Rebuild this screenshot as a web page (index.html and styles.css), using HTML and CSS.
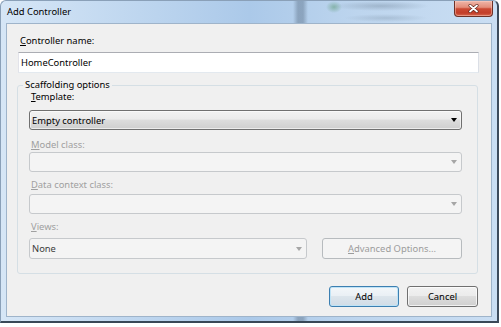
FILE: index.html
```html
<!DOCTYPE html>
<html>
<head>
    <title>Add Controller</title>
    <link rel="stylesheet" href="styles.css">
</head>
<body>
    <div class="window">
        <div class="titlebar">
            <span class="title">Add Controller</span>
            <div class="close">
                <svg width="11" height="9" viewBox="0 0 11 9">
                    <path d="M2 1.5 L9 7.5 M9 1.5 L2 7.5" stroke="#5a1f16" stroke-width="3" stroke-linecap="round"/>
                    <path d="M2 1.5 L9 7.5 M9 1.5 L2 7.5" stroke="#fff" stroke-width="1.8" stroke-linecap="round"/>
                </svg>
            </div>
        </div>

        <div class="client">
            <div class="lbl lbl-name"><u>C</u>ontroller name:</div>
            <div class="textbox">HomeController</div>

            <fieldset class="group">
                <legend>Scaffolding options</legend>

                <div class="lbl lbl-template"><u>T</u>emplate:</div>
                <div class="combo">Empty controller<span class="arrow"></span></div>

                <div class="lbl off lbl-model"><u>M</u>odel class:</div>
                <div class="combo off"><span class="arrow"></span></div>

                <div class="lbl off lbl-data"><u>D</u>ata context class:</div>
                <div class="combo off"><span class="arrow"></span></div>

                <div class="lbl off lbl-views"><u>V</u>iews:</div>
                <div class="views-row">
                    <div class="combo off views">None<span class="arrow"></span></div>
                    <button class="btn off advanced"><u>A</u>dvanced Options...</button>
                </div>
            </fieldset>

            <div class="actions">
                <button class="btn default add">Add</button>
                <button class="btn cancel">Cancel</button>
            </div>
        </div>
    </div>
</body>
</html>
```

FILE: styles.css
```css
* {
    box-sizing: border-box;
}

body {
    margin: 0;
    width: 501px;
    height: 327px;
    overflow: hidden;
    background-color: #fff;
    font-family: "Noto Sans", "DejaVu Sans", sans-serif;
    font-size: 9.4px;
    color: #000;
}

u {
    text-decoration: underline;
}

/* window frame (aero glass look) */
.window {
    width: 499px;
    height: 323px;
    display: flex;
    flex-direction: column;
    border: 1px solid #8aa0b8;
    border-right: 2px solid #3d4b5c;
    border-bottom: 2px solid #394857;
    border-radius: 6px 6px 0 0;
    background:
        linear-gradient(90deg, transparent 292px, rgba(80, 100, 122, 0.4) 297px, rgba(80, 100, 122, 0.4) 302px, transparent 307px),
        linear-gradient(90deg, #d6e6f6 0, #bed6ef 28%, #abc9e9 50%, #bdd5ee 72%, #cadef3 100%);
}

.titlebar {
    height: 22px;
    display: flex;
    align-items: center;
    padding: 0 4px 0 6px;
    background:
        radial-gradient(ellipse 8px 6px at 333px 6px, rgba(70, 140, 90, 0.45), transparent),
        radial-gradient(ellipse 48px 5px at 380px 5px, rgba(100, 120, 140, 0.35), transparent),
        radial-gradient(ellipse 42px 4px at 385px 17px, rgba(100, 120, 140, 0.25), transparent);
}

.title {
    line-height: 14px;
}

.close {
    margin-left: auto;
    align-self: flex-start;
    width: 39px;
    height: 16px;
    display: flex;
    align-items: center;
    justify-content: center;
    border: 1px solid #6d3127;
    border-top: none;
    border-radius: 0 0 4px 4px;
    background: linear-gradient(#efb6a9 0%, #e38d7a 42%, #cb4a33 52%, #c23d29 80%, #d8694f 100%);
    box-shadow: inset 0 0 0 1px rgba(255, 210, 200, 0.45);
}

.close svg {
    display: block;
}

/* dialog client area */
.client {
    margin: 0 5px;
    height: 294px;
    display: flex;
    flex-direction: column;
    padding: 10px 12px 0 11px;
    border: 1px solid #9fb4ca;
    background-color: #f0f0f0;
}

.lbl {
    line-height: 14px;
    padding-left: 2px;
}

.lbl.off {
    color: #a0a0a0;
}

.lbl-name {
    margin-bottom: 4px;
}

.lbl-template {
    margin-bottom: 6px;
}

.lbl-model {
    margin-top: 8px;
}

.lbl-data {
    margin-top: 6px;
    margin-bottom: 2px;
}

.lbl-views {
    margin-top: 6px;
    margin-bottom: 4px;
}

.textbox {
    height: 21px;
    display: flex;
    align-items: center;
    padding-left: 2px;
    border: 1px solid;
    border-color: #abadb3 #dbdfe6 #e3e9ef #e2e3ea;
    background-color: #fff;
}

.group {
    margin: 7px 1px 0 -1px;
    padding: 0 15px 14px 11px;
    border: 1px solid #d5dfe5;
    border-radius: 3px;
}

.group legend {
    margin-left: -6px;
    padding: 0 2px;
    line-height: 10px;
}

.combo {
    height: 20px;
    display: flex;
    align-items: center;
    padding-left: 2px;
    border: 1px solid #707070;
    border-radius: 3px;
    background: linear-gradient(#f2f2f2 0%, #ebebeb 45%, #dddddd 50%, #cfcfcf 100%);
    box-shadow: inset 0 0 0 1px rgba(255, 255, 255, 0.6);
}

.combo .arrow {
    margin-left: auto;
    margin-right: 4px;
    width: 0;
    height: 0;
    border-left: 3.5px solid transparent;
    border-right: 3.5px solid transparent;
    border-top: 4px solid #000;
}

.combo.off {
    border-color: #c6c9cc;
    background: #f4f4f4;
    box-shadow: none;
}

.combo.off .arrow {
    border-top-color: #a6a6a6;
}

.views-row {
    display: flex;
    gap: 15px;
}

.combo.views {
    width: 278px;
    height: 21px;
    color: #3c3c3c;
}

.btn {
    height: 21px;
    padding: 0;
    font: inherit;
    color: #000;
    border: 1px solid #707070;
    border-radius: 3px;
    background: linear-gradient(#f2f2f2 0%, #ebebeb 49%, #dddddd 50%, #cfcfcf 100%);
    box-shadow: inset 0 0 0 1px rgba(255, 255, 255, 0.7);
}

.btn.off {
    flex: 1;
    color: #9c9c9c;
    border-color: #b7bbbe;
    background: #f4f4f4;
    box-shadow: none;
}

.actions {
    display: flex;
    justify-content: flex-end;
    gap: 8px;
    margin: 12px 1px 0 0;
}

.btn.add {
    width: 70px;
    border-color: #3c7fb1;
    background: linear-gradient(#f3f7fa 0%, #e9eff4 49%, #dce5ec 50%, #d1dce6 100%);
    box-shadow: inset 0 0 0 1px #bfe3f6;
}

.btn.cancel {
    width: 71px;
}
```
